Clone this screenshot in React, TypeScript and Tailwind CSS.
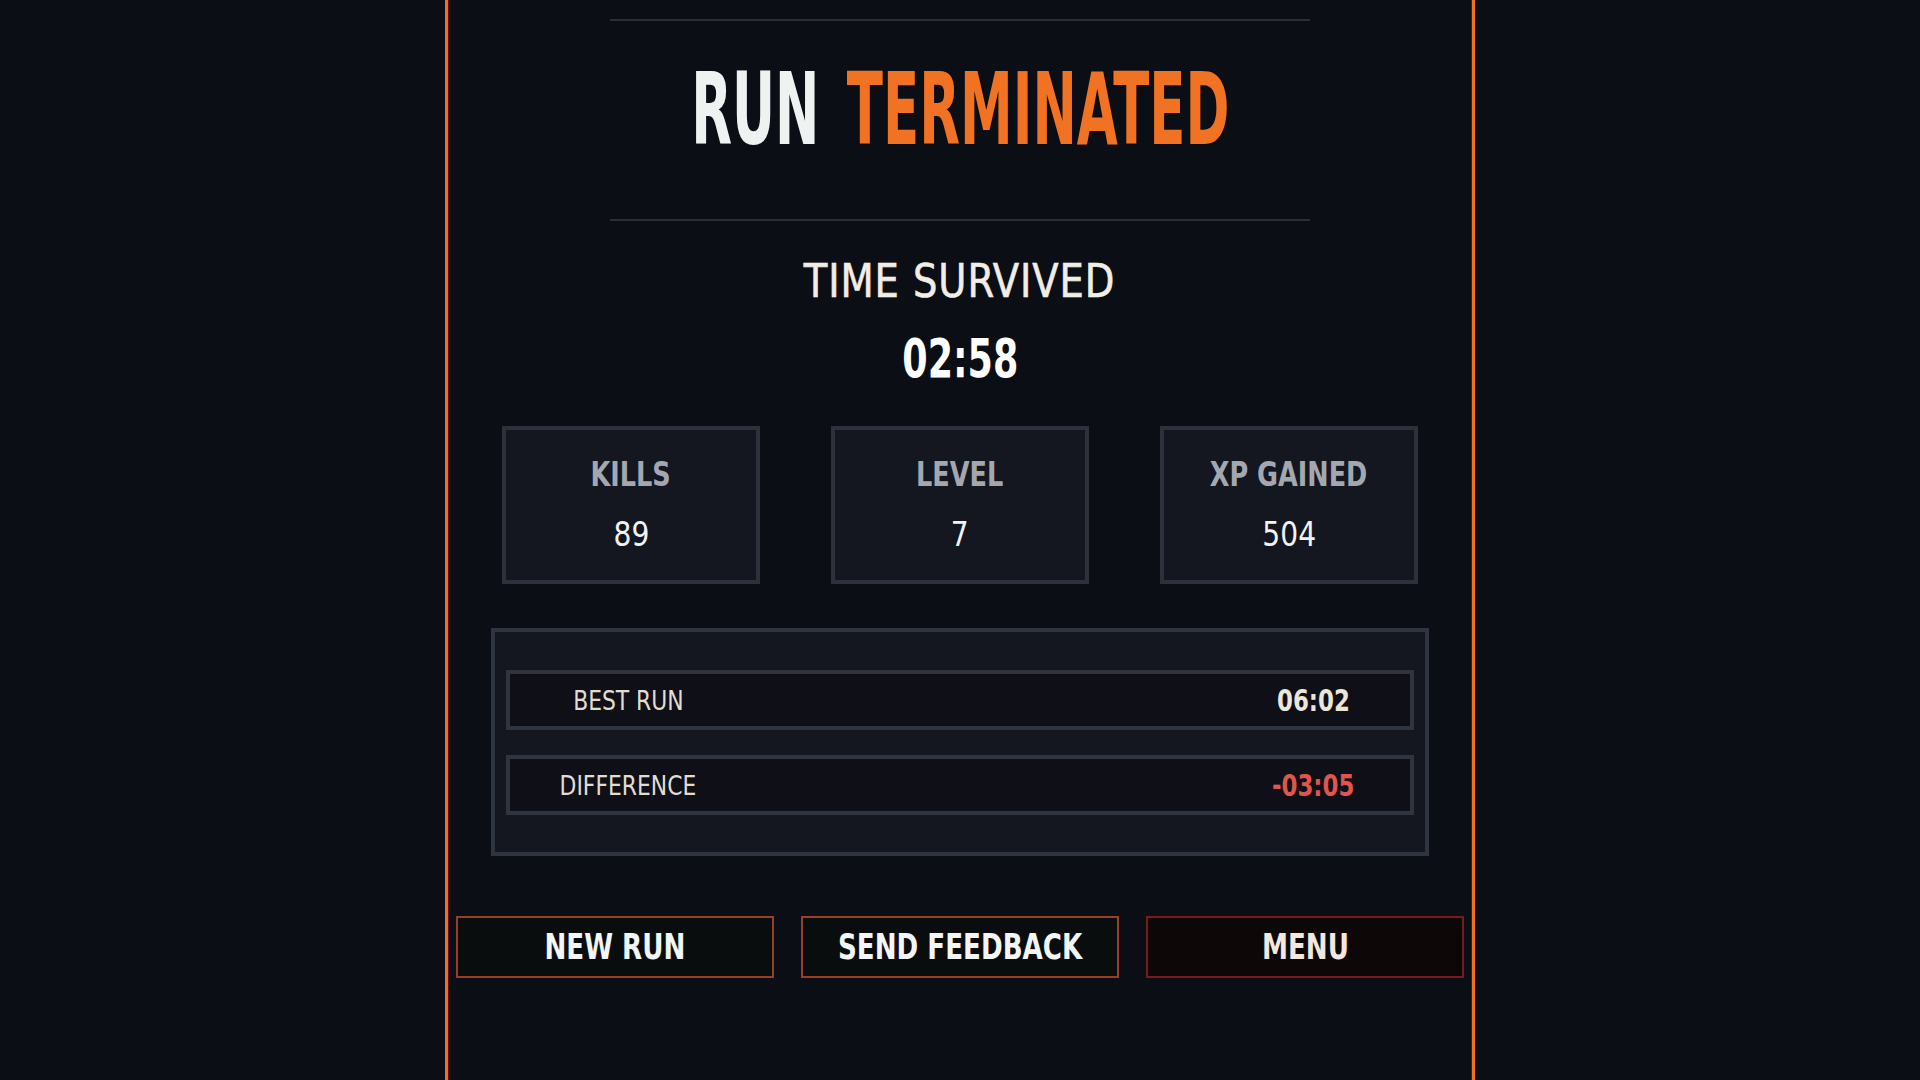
const narrow = "font-['Liberation_Sans_Narrow','DejaVu_Sans_Condensed','Liberation_Sans',sans-serif]";

function Stat({ label, value }: { label: string; value: string }) {
  return (
    <div className="w-[258px] h-[158px] border-4 border-[#2c313c] bg-[#141720] flex flex-col items-center pt-[28px]">
      <div className="inline-block scale-x-[0.86] text-[33px] leading-none font-bold text-[#a3a8b0]">{label}</div>
      <div className="mt-[26px] inline-block scale-x-[0.92] text-[34px] leading-none text-[#f1f3f5]">{value}</div>
    </div>
  );
}

function Row({ label, value, valueClass }: { label: string; value: string; valueClass: string }) {
  return (
    <div className="h-[60px] border-4 border-[#2e3440] bg-[#0e0f17] flex items-center justify-between px-[40px]">
      <div className="w-[156px] flex justify-center">
        <span className="inline-block scale-x-[0.9] text-[27px] leading-none text-[#e2ddd2] whitespace-nowrap">{label}</span>
      </div>
      <div className="w-[114px] flex justify-center">
        <span className={"inline-block scale-x-[0.82] text-[31px] leading-none font-bold whitespace-nowrap " + valueClass}>{value}</span>
      </div>
    </div>
  );
}

function Btn({ label, cls }: { label: string; cls: string }) {
  return (
    <button className={"h-[62px] border-2 flex items-center justify-center " + cls}>
      <span className="inline-block scale-x-[0.83] text-[35px] leading-none font-bold whitespace-nowrap">{label}</span>
    </button>
  );
}

export default function App() {
  return (
    <div className={"min-h-screen bg-[#0b0e15] flex justify-center " + narrow}>
      <div className="w-[1030px] min-h-screen border-x-[3px] border-[#f07020] shadow-[inset_1px_0_0_#5a1410,inset_-1px_0_0_#5a1410] px-2 pt-[19px] flex flex-col items-center">
        <div className="h-[2px] w-[700px] bg-[#2b2f38]" />

        <div className="mt-[39px] h-[100px] flex justify-center">
          <div className="inline-flex gap-[46px] scale-x-[0.595] text-[99px] leading-none font-bold whitespace-nowrap">
            <span className="text-[#eef3f1]">RUN</span>
            <span className="text-[#f07222]">TERMINATED</span>
          </div>
        </div>

        <div className="mt-[59px] h-[2px] w-[700px] bg-[#2b2f38]" />

        <div className="mt-[37px] h-[46px] flex justify-center">
          <span className="inline-block scale-x-[0.93] text-[46px] leading-none tracking-[1px] text-[#f2eee6] whitespace-nowrap [-webkit-text-stroke:0.6px_#f2eee6]">TIME SURVIVED</span>
        </div>
        <div className="mt-[28px] h-[54px] flex justify-center">
          <span className="inline-block scale-x-[0.75] text-[54px] leading-none font-bold text-white">02:58</span>
        </div>

        <div className="mt-[40px] flex gap-[71px]">
          <Stat label="KILLS" value="89" />
          <Stat label="LEVEL" value="7" />
          <Stat label="XP GAINED" value="504" />
        </div>

        <div className="mt-[44px] w-[938px] h-[228px] border-4 border-[#2e3440] bg-[#141720] px-[11px] pt-[38px] flex flex-col gap-[25px]">
          <Row label="BEST RUN" value="06:02" valueClass="text-[#ece6d8]" />
          <Row label="DIFFERENCE" value="-03:05" valueClass="text-[#e0564c]" />
        </div>

        <div className="mt-[60px] w-full grid grid-cols-3 gap-[27px]">
          <Btn label="NEW RUN" cls="border-[#9a3e26] bg-[#0a0d0e] text-[#f2f6f6]" />
          <Btn label="SEND FEEDBACK" cls="border-[#9a3e26] bg-[#0a0d0e] text-[#f2f6f6]" />
          <Btn label="MENU" cls="border-[#7a1a1e] bg-[#0e0707] text-[#f2e8de]" />
        </div>
      </div>
    </div>
  );
}
